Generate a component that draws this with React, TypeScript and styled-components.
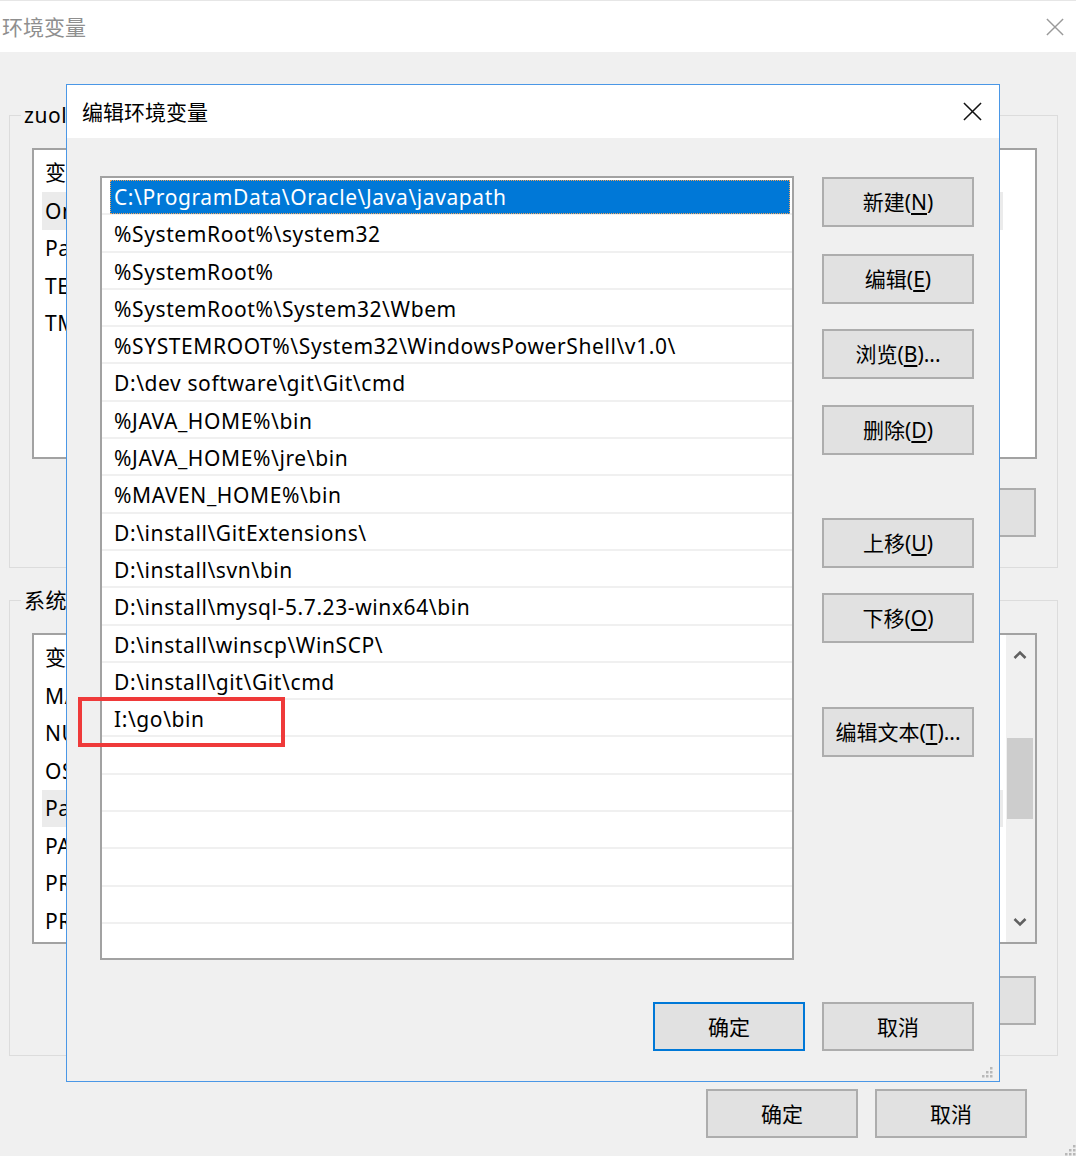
import React from "react";
import styled, { createGlobalStyle } from "styled-components";

const GlobalStyle = createGlobalStyle`
  html, body { margin: 0; padding: 0; background: #f0f0f0; }
  body { font-family: "Noto Sans", "Noto Sans CJK SC", sans-serif; color: #000; }
  * { box-sizing: border-box; }
`;

const Window = styled.div`
  position: relative;
  width: 1076px;
  height: 1156px;
  background: #f0f0f0;
  overflow: hidden;
  display: flex;
  flex-direction: column;
`;

const TitleBar = styled.div`
  height: 52px;
  flex: none;
  background: #fff;
  border-top: 1px solid #e6e6e6;
  display: flex;
  align-items: center;
  justify-content: space-between;
  padding: 0 12px 0 2px;
`;

const WindowTitle = styled.div<{ $active?: boolean }>`
  font-size: 21px;
  line-height: 24px;
  color: ${(p) => (p.$active ? "#000" : "#8f8f8f")};
`;

const Body = styled.div`
  display: flex;
  flex-direction: column;
  padding: 0 18px 0 9px;
`;

const Group = styled.fieldset<{ $mt: number }>`
  margin: ${(p) => p.$mt}px 0 0 0;
  padding: 0 20px 30px 22px;
  border: 1px solid #dcdcdc;
  min-width: 0;
`;

const Legend = styled.legend`
  font-size: 21px;
  line-height: 24px;
  letter-spacing: 0.6px;
  padding: 0 3px;
  margin-left: -11px;
`;

const ListBox = styled.div<{ $mt: number; $h: number }>`
  margin-top: ${(p) => p.$mt}px;
  height: ${(p) => p.$h}px;
  border: 2px solid #a2a2a2;
  background: #fff;
  display: flex;
  overflow: hidden;
`;

const ListContent = styled.div`
  flex: 1;
  min-width: 0;
  display: flex;
  flex-direction: column;
`;

const HeaderRow = styled.div`
  height: 42px;
  flex: none;
  display: grid;
  grid-template-columns: 300px 1fr;
  align-items: center;
  padding-left: 11px;
  font-size: 21px;
`;

const VarRow = styled.div<{ $selected?: boolean }>`
  height: 37.5px;
  width: 961px;
  flex: none;
  margin-left: 8px;
  padding-left: 3px;
  display: grid;
  grid-template-columns: 289px 1fr;
  align-items: center;
  font-size: 21px;
  letter-spacing: 0.6px;
  white-space: nowrap;
  overflow: hidden;
  background: ${(p) => (p.$selected ? "#ebebeb" : "transparent")};
`;

const ScrollBar = styled.div`
  width: 29px;
  flex: none;
  background: #f0f0f0;
  display: flex;
  flex-direction: column;
  align-items: center;
  padding: 0 2px 0 1px;
`;

const ScrollArrow = styled.div`
  height: 40px;
  flex: none;
  display: flex;
  align-items: center;
  justify-content: center;
`;

const ScrollTrack = styled.div`
  flex: 1;
  width: 100%;
  padding-top: 63px;
`;

const ScrollThumb = styled.div`
  height: 81px;
  background: #cdcdcd;
`;

const ButtonRow = styled.div<{ $mt: number; $pr?: number; $gap?: number }>`
  margin-top: ${(p) => p.$mt}px;
  display: flex;
  justify-content: flex-end;
  gap: ${(p) => p.$gap ?? 17}px;
  padding-right: ${(p) => p.$pr ?? 0}px;
`;

const Button = styled.button<{ $mt?: number; $default?: boolean; $h?: number }>`
  width: 152px;
  height: ${(p) => p.$h ?? 49}px;
  margin-top: ${(p) => p.$mt ?? 0}px;
  flex: none;
  background: #e1e1e1;
  border: 2px solid ${(p) => (p.$default ? "#0078d7" : "#adadad")};
  font-family: "Noto Sans", "Noto Sans CJK SC", sans-serif;
  font-size: 21px;
  line-height: 24px;
  color: #000;
  padding: 0;
  display: flex;
  align-items: center;
  justify-content: center;
  u { text-underline-offset: 3px; }
`;

const Dialog = styled.div`
  position: absolute;
  left: 66px;
  top: 84px;
  width: 934px;
  height: 998px;
  border: 1px solid #4a97e6;
  background: #f0f0f0;
  display: flex;
  flex-direction: column;
`;

const DialogTitleBar = styled.div`
  height: 53px;
  flex: none;
  background: #fff;
  display: flex;
  align-items: center;
  justify-content: space-between;
  padding: 0 17px 0 15px;
`;

const DialogBody = styled.div`
  display: flex;
  gap: 28px;
  padding: 38px 25px 0 33px;
`;

const PathList = styled.div`
  width: 694px;
  height: 784px;
  flex: none;
  border: 2px solid #a2a2a2;
  background: #fff;
  display: flex;
  flex-direction: column;
  overflow: hidden;
`;

const PathRow = styled.div`
  height: 37.3px;
  flex: none;
  border-bottom: 2px solid #f0f0f0;
  padding: 2px 2px 0 8px;
  display: flex;
`;

const PathCell = styled.div<{ $selected?: boolean }>`
  flex: 1;
  height: 34px;
  display: flex;
  align-items: center;
  padding-left: 3px;
  font-size: 21px;
  letter-spacing: 0.6px;
  white-space: nowrap;
  background: ${(p) => (p.$selected ? "#0078d7" : "transparent")};
  color: ${(p) => (p.$selected ? "#fff" : "#000")};
  border: 1px ${(p) => (p.$selected ? "dotted #f0a25a" : "solid transparent")};
`;

const SideButtons = styled.div`
  display: flex;
  flex-direction: column;
`;

const Highlight = styled.div`
  position: absolute;
  left: 78px;
  top: 697px;
  width: 207px;
  height: 50px;
  border: 4px solid #ef3a3a;
`;

const Grip = styled.svg<{ $right: number; $bottom: number }>`
  position: absolute;
  right: ${(p) => p.$right}px;
  bottom: ${(p) => p.$bottom}px;
`;

const CloseIcon = ({ color, size }: { color: string; size: number }) => (
  <svg width={size} height={size} viewBox="0 0 20 20">
    <path d="M1 1 L19 19 M19 1 L1 19" stroke={color} strokeWidth="1.6" fill="none" />
  </svg>
);

const Chevron = ({ up }: { up?: boolean }) => (
  <svg width="14" height="10" viewBox="0 0 14 10">
    <path
      d={up ? "M1.5 8 L7 2.5 L12.5 8" : "M1.5 2 L7 7.5 L12.5 2"}
      stroke="#606060"
      strokeWidth="2.6"
      fill="none"
    />
  </svg>
);

const GripDots = () => (
  <>
    {[
      [10, 2],
      [10, 6],
      [6, 6],
      [10, 10],
      [6, 10],
      [2, 10],
    ].map(([x, y], i) => (
      <rect key={i} x={x} y={y} width="2.5" height="2.5" fill="#b8b8b8" />
    ))}
  </>
);

const userVars = [
  ["OneDrive", "C:\\Users\\zuolin\\OneDrive"],
  ["Path", "C:\\Users\\zuolin\\AppData\\Local\\Microsoft\\WindowsApps;"],
  ["TEMP", "%USERPROFILE%\\AppData\\Local\\Temp"],
  ["TMP", "%USERPROFILE%\\AppData\\Local\\Temp"],
];

const sysVars = [
  ["MAVEN_HOME", "D:\\install\\apache-maven-3.5.4"],
  ["NUMBER_OF_PROCESSORS", "4"],
  ["OS", "Windows_NT"],
  ["Path", "C:\\ProgramData\\Oracle\\Java\\javapath;%SystemRoot%\\system32"],
  ["PATHEXT", ".COM;.EXE;.BAT;.CMD;.VBS;.VBE;.JS;.JSE;.WSF;.WSH;.MSC"],
  ["PROCESSOR_ARCHITECTURE", "AMD64"],
  ["PROCESSOR_IDENTIFIER", "Intel64 Family 6 Model 58 Stepping 9"],
];

const paths = [
  "C:\\ProgramData\\Oracle\\Java\\javapath",
  "%SystemRoot%\\system32",
  "%SystemRoot%",
  "%SystemRoot%\\System32\\Wbem",
  "%SYSTEMROOT%\\System32\\WindowsPowerShell\\v1.0\\",
  "D:\\dev software\\git\\Git\\cmd",
  "%JAVA_HOME%\\bin",
  "%JAVA_HOME%\\jre\\bin",
  "%MAVEN_HOME%\\bin",
  "D:\\install\\GitExtensions\\",
  "D:\\install\\svn\\bin",
  "D:\\install\\mysql-5.7.23-winx64\\bin",
  "D:\\install\\winscp\\WinSCP\\",
  "D:\\install\\git\\Git\\cmd",
  "I:\\go\\bin",
];

const rows = [...paths, ...Array(7).fill("")];

export default function App() {
  return (
    <>
      <GlobalStyle />
      <Window>
        <TitleBar>
          <WindowTitle>环境变量</WindowTitle>
          <CloseIcon color="#9a9a9a" size={18} />
        </TitleBar>
        <Body>
          <Group $mt={51}>
            <Legend>zuolin 的用户变量(U)</Legend>
            <ListBox $mt={21} $h={311}>
              <ListContent>
                <HeaderRow>
                  <span>变量</span>
                  <span>值</span>
                </HeaderRow>
                {userVars.map(([k, v], i) => (
                  <VarRow key={k} $selected={i === 0}>
                    <span>{k}</span>
                    <span>{v}</span>
                  </VarRow>
                ))}
              </ListContent>
            </ListBox>
            <ButtonRow $mt={29} $pr={1}>
              <Button>新建(<u>N</u>)...</Button>
              <Button>编辑(<u>E</u>)...</Button>
              <Button>删除(<u>D</u>)</Button>
            </ButtonRow>
          </Group>
          <Group $mt={20}>
            <Legend>系统变量(S)</Legend>
            <ListBox $mt={21} $h={311}>
              <ListContent>
                <HeaderRow>
                  <span>变量</span>
                  <span>值</span>
                </HeaderRow>
                {sysVars.map(([k, v], i) => (
                  <VarRow key={k + i} $selected={i === 3}>
                    <span>{k}</span>
                    <span>{v}</span>
                  </VarRow>
                ))}
              </ListContent>
              <ScrollBar>
                <ScrollArrow>
                  <Chevron up />
                </ScrollArrow>
                <ScrollTrack>
                  <ScrollThumb />
                </ScrollTrack>
                <ScrollArrow>
                  <Chevron />
                </ScrollArrow>
              </ScrollBar>
            </ListBox>
            <ButtonRow $mt={32} $pr={1}>
              <Button>新建(<u>W</u>)...</Button>
              <Button>编辑(<u>I</u>)...</Button>
              <Button>删除(<u>L</u>)</Button>
            </ButtonRow>
          </Group>
          <ButtonRow $mt={33} $pr={31}>
            <Button>确定</Button>
            <Button>取消</Button>
          </ButtonRow>
        </Body>
        <Grip $right={0} $bottom={0} width="13" height="13" viewBox="0 0 13 13">
          <GripDots />
        </Grip>

        <Dialog>
          <DialogTitleBar>
            <WindowTitle $active>编辑环境变量</WindowTitle>
            <CloseIcon color="#111" size={19} />
          </DialogTitleBar>
          <DialogBody>
            <PathList>
              {rows.map((p, i) => (
                <PathRow key={i}>
                  <PathCell $selected={i === 0}>{p}</PathCell>
                </PathRow>
              ))}
            </PathList>
            <SideButtons>
              <Button $mt={1} $h={50}>新建(<u>N</u>)</Button>
              <Button $mt={27} $h={50}>编辑(<u>E</u>)</Button>
              <Button $mt={25} $h={50}>浏览(<u>B</u>)...</Button>
              <Button $mt={26} $h={50}>删除(<u>D</u>)</Button>
              <Button $mt={63} $h={50}>上移(<u>U</u>)</Button>
              <Button $mt={25} $h={50}>下移(<u>O</u>)</Button>
              <Button $mt={64} $h={50}>编辑文本(<u>T</u>)...</Button>
            </SideButtons>
          </DialogBody>
          <ButtonRow $mt={42} $pr={25}>
            <Button $default $h={49}>确定</Button>
            <Button $h={49}>取消</Button>
          </ButtonRow>
          <Grip $right={6} $bottom={3} width="13" height="13" viewBox="0 0 13 13">
            <GripDots />
          </Grip>
        </Dialog>
        <Highlight />
      </Window>
    </>
  );
}
